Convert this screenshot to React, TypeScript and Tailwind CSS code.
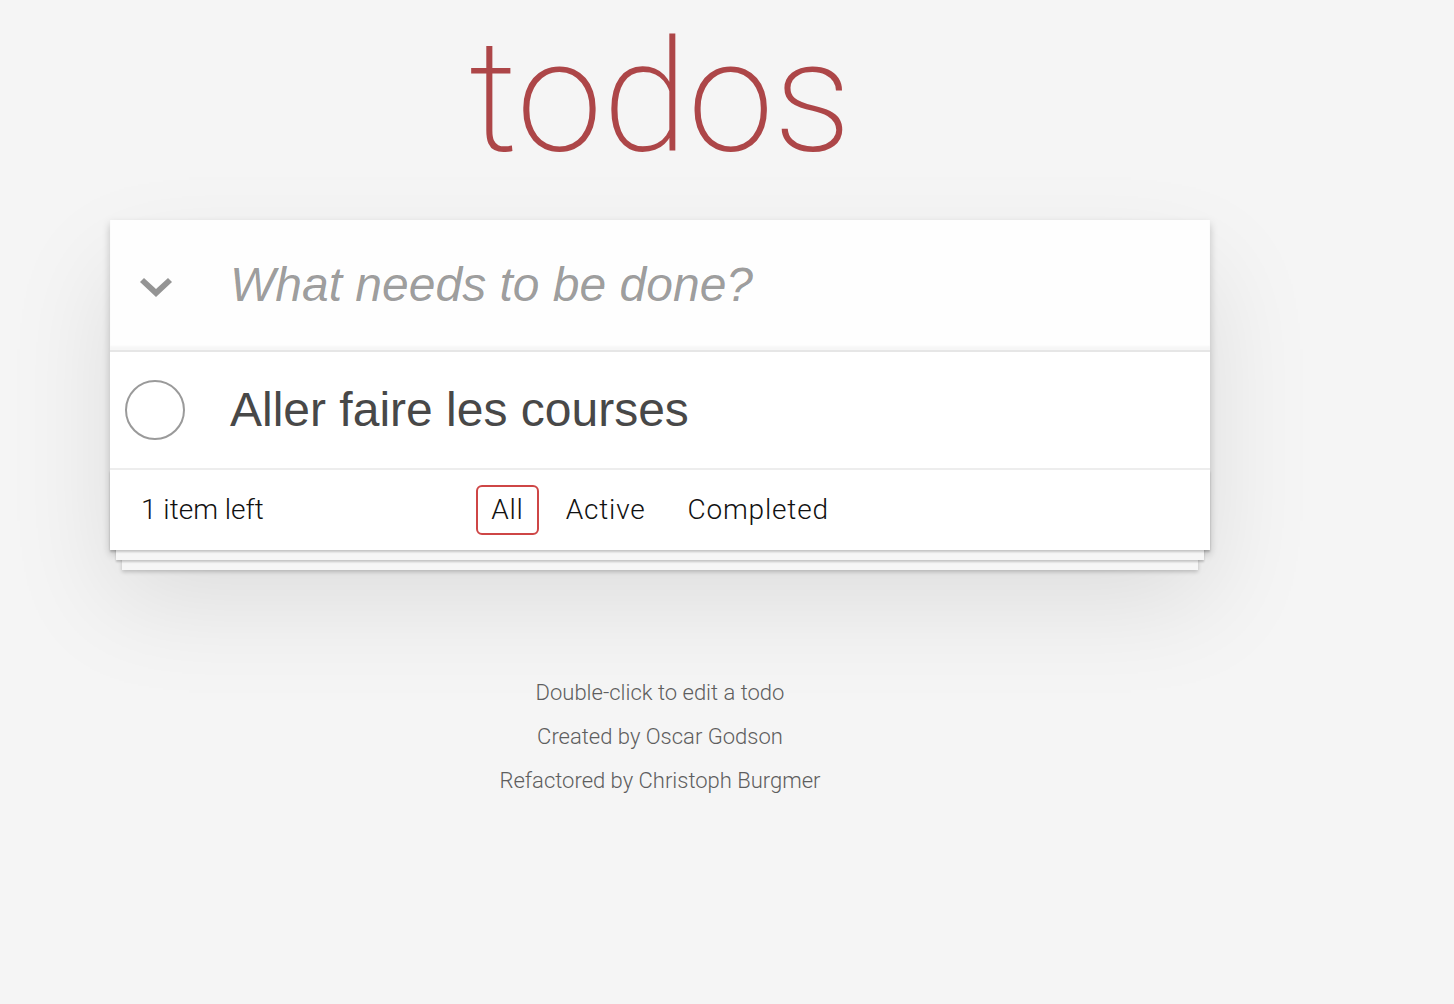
import { useState } from 'react';

const filters = ['All', 'Active', 'Completed'];

function Chevron() {
  return (
    <svg width="32" height="20" viewBox="0 0 32 20" className="block">
      <polygon points="0,4 4,0 16,11 28,0 32,4 16,19" fill="#949494" />
    </svg>
  );
}

export default function App() {
  const [text, setText] = useState('');

  return (
    <div className="min-h-screen bg-[#f5f5f5] font-['Helvetica_Neue',Roboto,'Liberation_Sans',sans-serif] font-light text-[#111111]">
      <div className="ml-[110px] w-[1100px] pb-10">
        {/* Header title */}
        <h1 className="h-[220px] pt-[20px] text-center text-[155px] leading-none font-extralight text-[#ad4648]">
          todos
        </h1>

        {/* Card */}
        <section className="bg-white shadow-[0_4px_8px_0_rgba(0,0,0,0.2),0_50px_100px_0_rgba(0,0,0,0.1)]">
          <header className="flex h-[130px] items-center bg-black/[0.003] shadow-[inset_0_-4px_2px_rgba(0,0,0,0.03)]">
            <label className="flex w-[120px] shrink-0 pt-[5px] pl-[30px]">
              <Chevron />
            </label>
            <input
              value={text}
              onChange={(e) => setText(e.target.value)}
              placeholder="What needs to be done?"
              className="w-full pr-8 font-['Liberation_Sans',Arial,sans-serif] text-[48px] font-normal text-[#484848] outline-none placeholder:italic placeholder:text-black/40"
            />
          </header>

          <ul className="border-t-2 border-[#e6e6e6]">
            <li className="flex items-center border-b-2 border-[#ededed]">
              <div className="flex w-[120px] shrink-0 pl-[15px]">
                <span className="block h-[60px] w-[60px] rounded-full border-2 border-[#9a9a9a]" />
              </div>
              <label className="py-[30px] font-['Liberation_Sans',Arial,sans-serif] text-[48px] leading-[56px] font-normal text-[#484848]">
                Aller faire les courses
              </label>
            </li>
          </ul>

          <footer className="grid h-[80px] grid-cols-[1fr_auto_1fr] items-center px-[30px] text-[28px] shadow-[0_2px_2px_rgba(0,0,0,0.2),0_16px_0_-6px_#f6f6f6,0_18px_2px_-6px_rgba(0,0,0,0.2),0_32px_0_-12px_#f6f6f6,0_34px_4px_-12px_rgba(0,0,0,0.2)]">
            <span className="pl-[1px]">1 item left</span>
            <ul className="flex tracking-[0.8px]">
              {filters.map((f, i) => (
                <li key={f}>
                  <a
                    href="#/"
                    className={`m-[6px] block rounded-[6px] border-2 px-[13px] py-[6px] leading-[34px] ${
                      i === 0 ? 'border-[#ce4646]' : 'border-transparent'
                    }`}
                  >
                    {f}
                  </a>
                </li>
              ))}
            </ul>
            <span />
          </footer>
        </section>

        {/* Info */}
        <div className="mt-[132px] flex flex-col gap-[22px] text-center text-[22px] leading-none text-[#5e5e5e]">
          <p>Double-click to edit a todo</p>
          <p>Created by Oscar Godson</p>
          <p>Refactored by Christoph Burgmer</p>
        </div>
      </div>
    </div>
  );
}
